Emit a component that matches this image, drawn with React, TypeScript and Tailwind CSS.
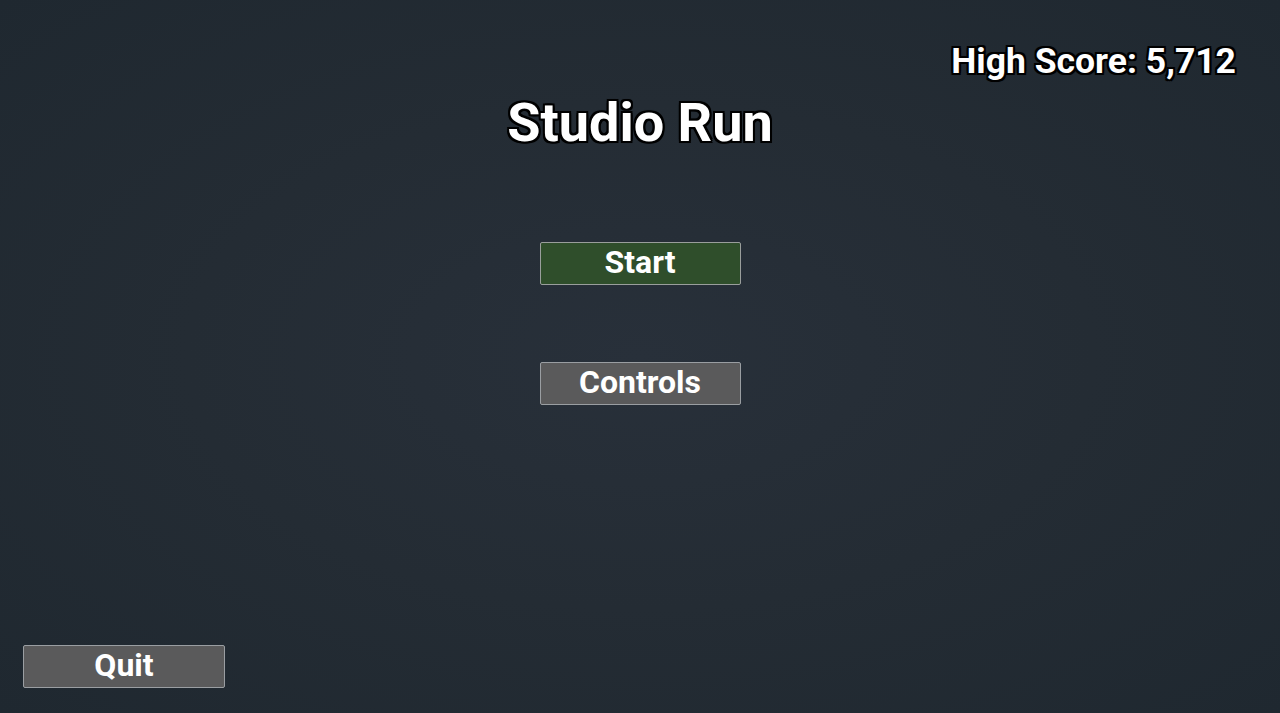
import React from "react";

const outline =
  "[text-shadow:-2px_-2px_0_#000,2px_-2px_0_#000,-2px_2px_0_#000,2px_2px_0_#000,0_-2px_0_#000,0_2px_0_#000,-2px_0_0_#000,2px_0_0_#000,0_0_3px_#000]";

export default function App() {
  return (
    <div
      className="w-[1280px] h-[713px] overflow-hidden flex flex-col bg-[radial-gradient(ellipse_at_center,#28303a_0%,#242c34_50%,#1f2830_100%)] text-white"
      style={{ fontFamily: "Roboto, 'Liberation Sans', sans-serif" }}
    >
      <div className="flex justify-end pr-[44px] pt-[40px] h-[93px]">
        <div className={`text-[35.5px] font-bold leading-[42px] ${outline}`}>High Score: 5,712</div>
      </div>
      <div className="flex justify-center">
        <div className={`text-[54px] font-bold leading-[60px] ${outline}`}>Studio Run</div>
      </div>
      <div className="flex flex-col items-center mt-[89px] gap-[77px]">
        <button className="w-[201px] h-[43px] rounded-[2px] border border-[#9a9e9c] bg-[#2f4e2b] text-[32px] font-bold leading-none pb-[3px] flex items-center justify-center">
          Start
        </button>
        <button className="w-[201px] h-[43px] rounded-[2px] border border-[#9a9ea2] bg-[#5a5a5b] text-[32px] font-bold leading-none pb-[3px] flex items-center justify-center">
          Controls
        </button>
      </div>
      <div className="flex-1" />
      <div className="pl-[23px] pb-[25px]">
        <button className="w-[202px] h-[43px] rounded-[2px] border border-[#9a9ea2] bg-[#5a5a5b] text-[32px] font-bold leading-none pb-[3px] flex items-center justify-center">
          Quit
        </button>
      </div>
    </div>
  );
}
